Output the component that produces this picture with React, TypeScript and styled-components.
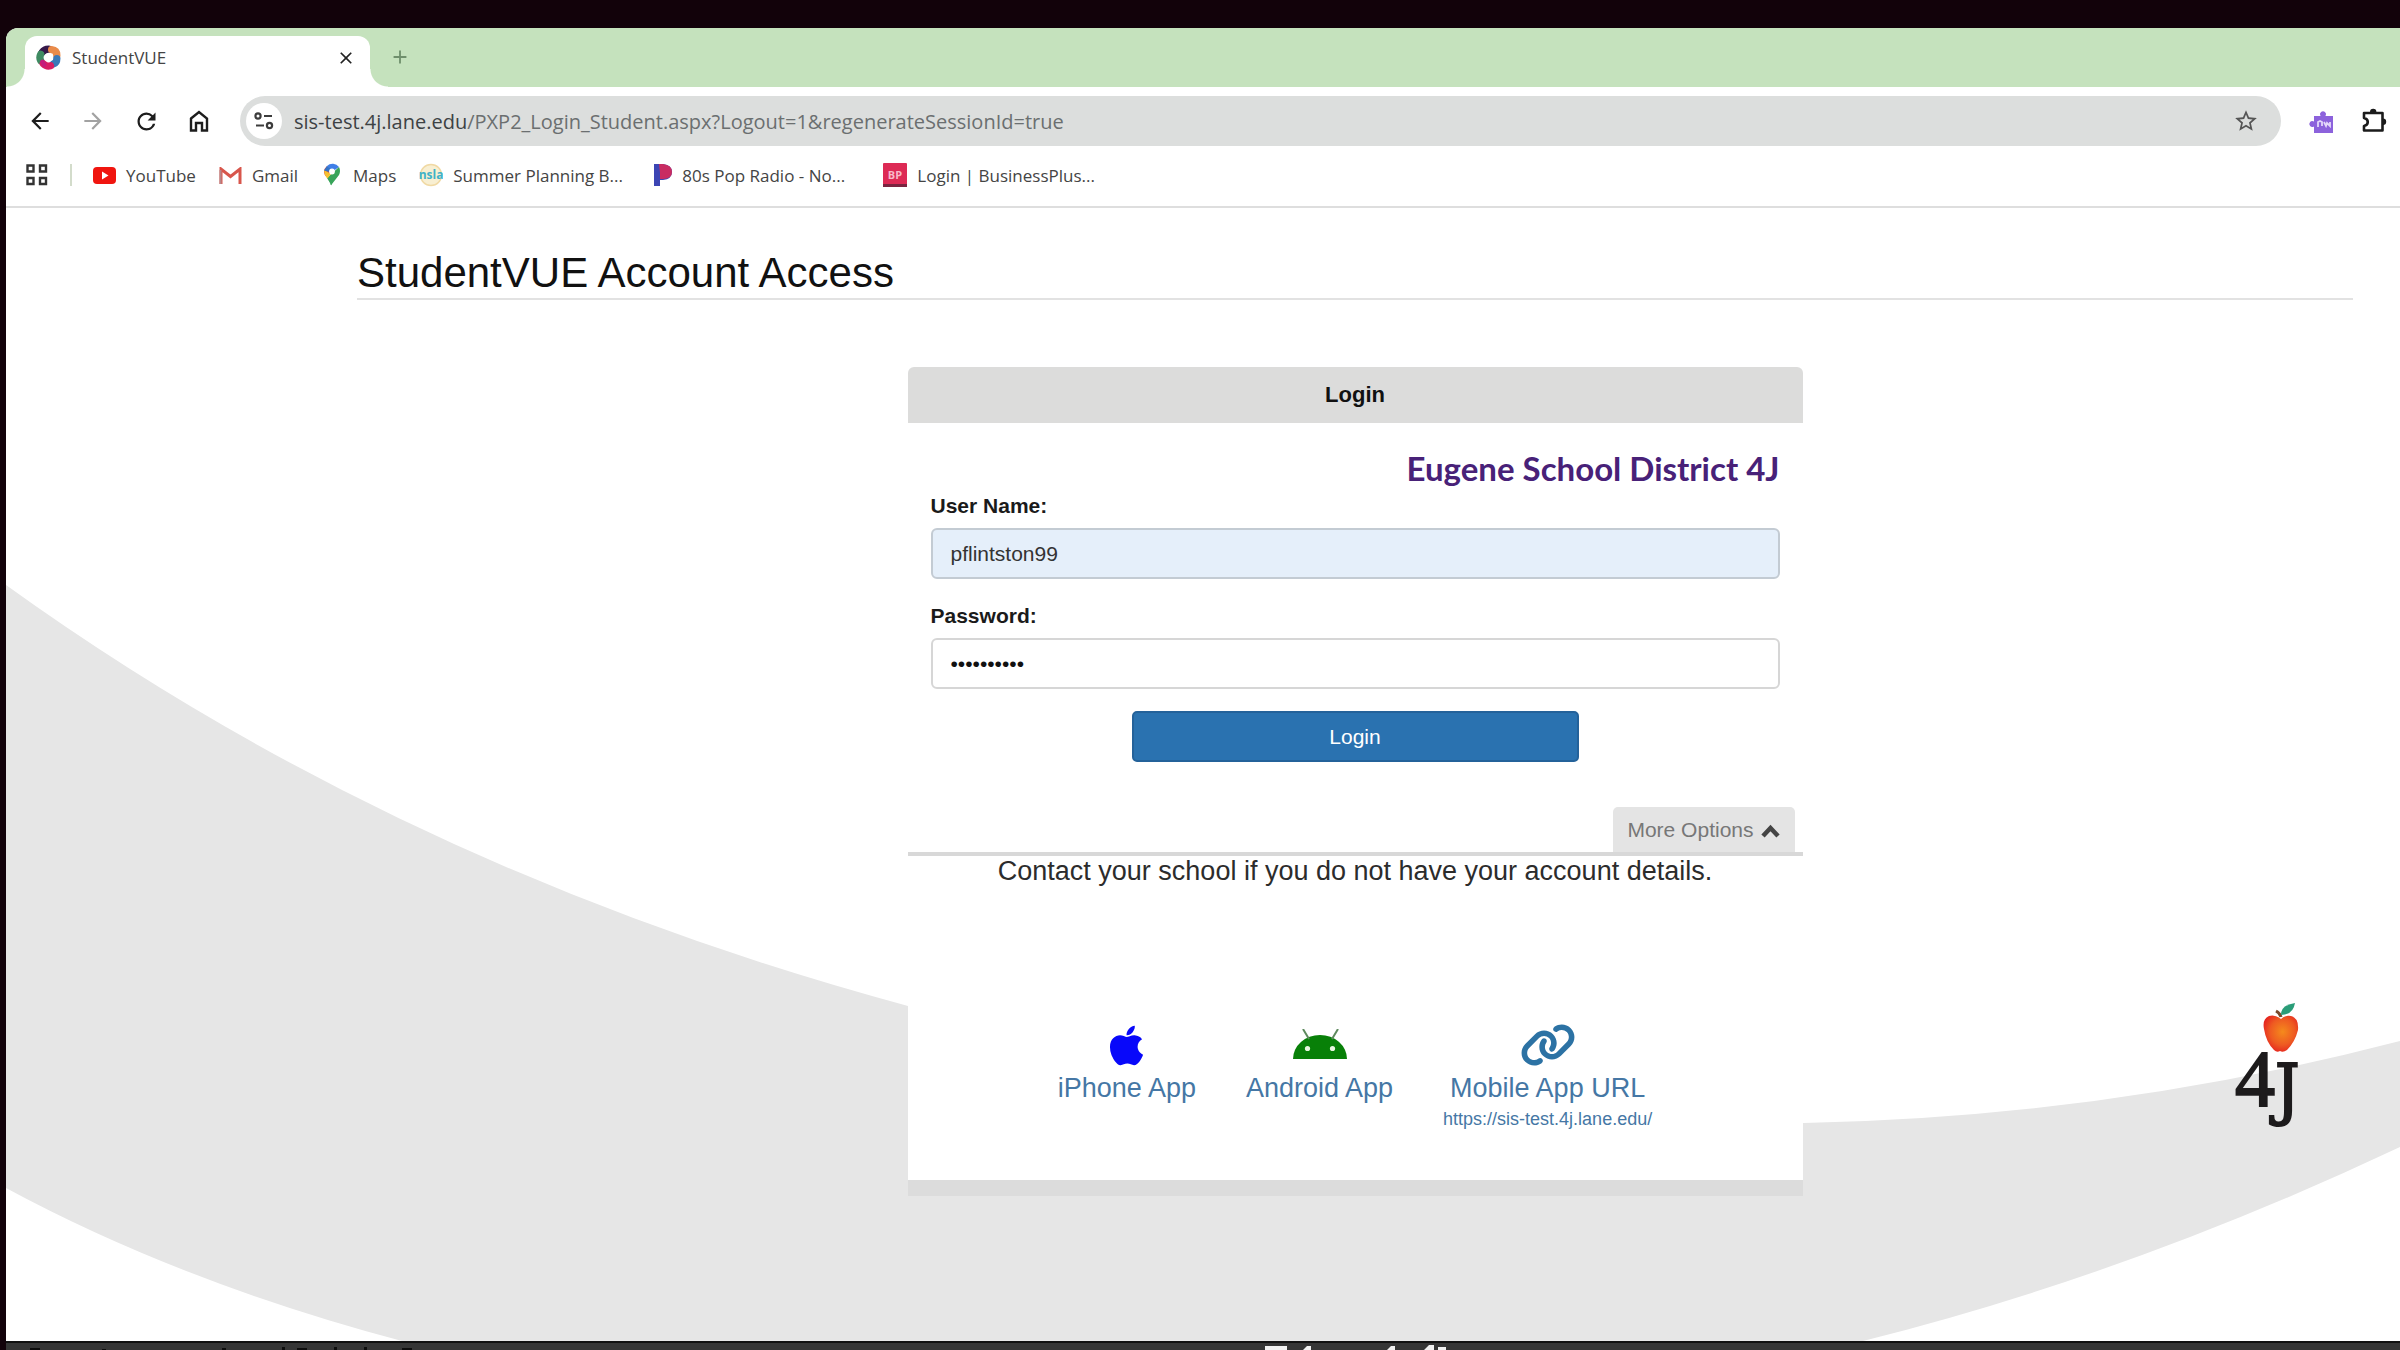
import React from "react";
import styled, { createGlobalStyle } from "styled-components";
import { MdArrowBack, MdArrowForward, MdRefresh, MdStarBorder, MdClose, MdAdd } from "react-icons/md";
import { FaApple, FaLink } from "react-icons/fa6";

const uiFont = `"Open Sans", "Noto Sans", sans-serif`;
const pageFont = `"Liberation Sans", Arial, sans-serif`;

const GlobalStyle = createGlobalStyle`
  *, *::before, *::after { box-sizing: border-box; }
  body { margin: 0; background: #12020a; }
  button { border: 0; padding: 0; background: none; font: inherit; color: inherit; cursor: pointer; }
  svg { display: block; flex: none; }
`;

const Desktop = styled.div`
  display: flex;
  flex-direction: column;
  min-height: 100vh;
  padding: 28px 0 0 6px;
  background: #12020a;
  overflow: hidden;
`;

const BrowserWindow = styled.div`
  flex: 1;
  display: flex;
  flex-direction: column;
  border-radius: 12px 0 0 0;
  overflow: hidden;
  background: #fff;
`;

const TabStrip = styled.div`
  display: flex;
  align-items: flex-end;
  height: 59px;
  padding-left: 19px;
  background: #c5e2bd;
  font-family: ${uiFont};
`;

const Tab = styled.div`
  position: relative;
  display: flex;
  align-items: center;
  width: 345px;
  height: 51px;
  padding: 0 14px 8px 11px;
  gap: 11px;
  border-radius: 12px 12px 0 0;
  background: #fff;
  font-size: 17px;
  color: #444;

  &::before,
  &::after {
    content: "";
    position: absolute;
    bottom: 0;
    width: 18px;
    height: 18px;
  }
  &::before {
    right: 100%;
    background: radial-gradient(circle at 0 0, transparent 17px, #fff 18px);
  }
  &::after {
    left: 100%;
    background: radial-gradient(circle at 100% 0, transparent 17px, #fff 18px);
  }
`;

const TabTitle = styled.span`
  flex: 1;
`;

const NewTab = styled.button`
  display: flex;
  margin: 0 0 19px 19px;
  color: #6f8f6c;
`;

const Toolbar = styled.div`
  display: flex;
  align-items: center;
  padding: 9px 12px 9px 20px;
  gap: 25px;
  color: #222;
`;

const IconButton = styled.button<{ $dim?: boolean }>`
  display: flex;
  align-items: center;
  justify-content: center;
  width: 28px;
  height: 28px;
  color: ${(p) => (p.$dim ? "#a2a2a2" : "#1d1d1d")};
`;

const AddressBar = styled.div`
  flex: 1;
  display: flex;
  align-items: center;
  height: 50px;
  margin-left: 2px;
  padding: 0 21px 0 6px;
  gap: 12px;
  border-radius: 25px;
  background: #dcdedd;
  font-family: ${uiFont};
  font-size: 20px;
`;

const SiteInfo = styled.button`
  display: flex;
  align-items: center;
  justify-content: center;
  width: 36px;
  height: 36px;
  border-radius: 50%;
  background: #fff;
`;

const Address = styled.div`
  flex: 1;
  color: #6b6f70;
  white-space: nowrap;

  b {
    font-weight: 400;
    color: #3d4244;
  }
`;

const Extensions = styled.div`
  display: flex;
  gap: 26px;
`;

const Bookmarks = styled.nav`
  display: flex;
  align-items: center;
  height: 53px;
  padding: 0 20px 11px;
  gap: 23px;
  border-bottom: 2px solid #dedede;
  font-family: ${uiFont};
  font-size: 17px;
  color: #444;
`;

const Divider = styled.span`
  width: 2px;
  height: 22px;
  margin: 0 -2px 0 -1px;
  background: #d3dccb;
`;

const Bookmark = styled.a`
  display: flex;
  align-items: center;
  gap: 10px;
  color: inherit;
  text-decoration: none;
  white-space: nowrap;
`;

const BookmarkLabel = styled.span<{ $wide?: boolean }>`
  min-width: ${(p) => (p.$wide ? "178px" : "0")};
`;

const Page = styled.main`
  position: relative;
  flex: 1;
  padding: 41px 47px 40px 351px;
  font-family: ${pageFont};
  color: #222;
`;

const Backdrop = styled.svg`
  position: absolute;
  inset: 0;
  width: 100%;
  height: 100%;
`;

const Content = styled.div`
  position: relative;
`;

const Title = styled.h1`
  margin: 0 0 67px;
  padding-bottom: 1px;
  border-bottom: 2px solid #e2e2e2;
  font-size: 42px;
  line-height: 48px;
  font-weight: 400;
  color: #111;
`;

const Panel = styled.section`
  width: 895px;
  max-width: 100%;
  margin: 0 auto;
  border-bottom: 16px solid #dcdcdc;
  border-radius: 6px 6px 0 0;
  background: #fff;
`;

const PanelHeader = styled.h2`
  margin: 0;
  border-radius: 6px 6px 0 0;
  background: #dcdcdb;
  font-size: 22px;
  line-height: 56px;
  text-align: center;
  color: #111;
`;

const LoginForm = styled.form`
  display: flex;
  flex-direction: column;
  padding: 27px 23px 45px;
`;

const District = styled.div`
  margin-bottom: 8px;
  font-family: Lato, sans-serif;
  font-size: 33px;
  line-height: 36px;
  font-weight: 700;
  text-align: right;
  color: #482178;
`;

const Label = styled.label`
  margin-bottom: 10px;
  font-size: 21px;
  line-height: 24px;
  font-weight: 700;
  color: #1a1a1a;
`;

const Field = styled.input<{ $filled?: boolean }>`
  height: 51px;
  margin-bottom: 25px;
  padding: 0 18px;
  border: 2px solid ${(p) => (p.$filled ? "#c3cbd3" : "#d6d6d6")};
  border-radius: 6px;
  background: ${(p) => (p.$filled ? "#e5effa" : "#fff")};
  font-family: ${pageFont};
  font-size: 21px;
  color: #333;

  &[type="password"] {
    margin-bottom: 22px;
    color: #111;
  }
`;

const LoginButton = styled.button`
  align-self: center;
  width: 447px;
  height: 51px;
  border: 2px solid #24629a;
  border-radius: 5px;
  background: #2a72b0;
  font-size: 21px;
  color: #fff;
`;

const OptionsBar = styled.div`
  display: flex;
  justify-content: flex-end;
  padding-right: 8px;
  border-bottom: 4px solid #d8d8d8;
`;

const OptionsTab = styled.button`
  display: flex;
  align-items: center;
  height: 45px;
  padding: 0 15px 0 14px;
  gap: 7px;
  border-radius: 5px 5px 0 0;
  background: #e4e4e4;
  font-size: 21px;
  color: #777;
`;

const Contact = styled.p`
  margin: 0 0 137px;
  font-size: 27px;
  line-height: 30px;
  text-align: center;
  color: #2c2c2c;
`;

const Apps = styled.div`
  display: flex;
  justify-content: center;
  gap: 50px;
  padding-bottom: 50px;
`;

const AppLink = styled.a`
  display: flex;
  flex-direction: column;
  align-items: center;
  font-size: 27px;
  line-height: 30px;
  color: #4577a5;
  text-decoration: none;

  small {
    margin-top: 5px;
    font-size: 18px;
    line-height: 22px;
  }
`;

const AppIcon = styled.span<{ $color: string }>`
  display: flex;
  align-items: center;
  height: 44px;
  margin-bottom: 6px;
  color: ${(p) => p.$color};
`;

const DistrictLogo = styled.svg`
  position: absolute;
  right: 96px;
  bottom: 208px;
`;

const CaptionStrip = styled.footer`
  height: 9px;
  border-top: 2px solid #111;
  background: #353535;
`;

const StudentVueIcon = () => (
  <svg width="25" height="25" viewBox="0 0 24 24" fill="none" strokeWidth="7" strokeLinecap="round">
    <path d="M6 7Q8 4 12 4" stroke="#35184a" />
    <path d="M15 4.500Q20 5 20 10" stroke="#e98b4a" />
    <path d="M20 13Q20 17 17 18" stroke="#3a79b8" />
    <path d="M4.500 15Q3 12 4.500 9" stroke="#3f8b62" />
    <path d="M14 20Q10 21 7 18" stroke="#d81e63" />
    <path d="M6 16l2 3" stroke="#c41c7c" strokeWidth="4" />
    <circle cx="12" cy="12" r="3.800" fill="#fff" stroke="none" />
  </svg>
);

const HomeIcon = () => (
  <svg width="20" height="24" viewBox="0 0 20 24" fill="none" stroke="currentColor" strokeWidth="2.4">
    <path d="M2 9.5L10 3l8 6.500V21.500h-5v-7.500H7v7.500H2z" />
  </svg>
);

const TuneIcon = () => (
  <svg width="20" height="20" viewBox="0 0 20 20" fill="none" stroke="#3c3c3c" strokeWidth="2.200">
    <circle cx="4" cy="5" r="2.600" />
    <path d="M10 5h8M2 14.500h8" />
    <circle cx="15.500" cy="14.500" r="2.600" />
  </svg>
);

const PurplePuzzle = () => (
  <svg width="25" height="25" viewBox="0 0 25 25">
    <path d="M6 7h6.500a3 3 0 1 1 5 0H25v17H6v-6.500a3 3 0 1 1 0-5z" fill="#8c62dc" />
    <path d="M10 18v-5l2-1 2 1v4m2-4l2 4 1-3 3 3v-4" fill="none" stroke="#e4d8fa" strokeWidth="1.800" />
  </svg>
);

const PuzzleIcon = () => (
  <svg width="25" height="26" viewBox="0 0 25 26">
    <path d="M2 5h18.500v17.500H2v-4.500c5-1 5-7 0-8z" fill="none" stroke="#1b1b1b" strokeWidth="2.600" strokeLinejoin="round" />
    <path d="M8 4a3.200 3.200 0 0 1 6.400 0zM21 10.500a3.200 3.200 0 0 1 0 6.400z" fill="#1b1b1b" />
  </svg>
);

const GridIcon = () => (
  <svg width="22" height="22" viewBox="0 0 22 22" fill="none" stroke="#333" strokeWidth="2.400">
    <path d="M1.500 1.500h6v6h-6zM14 1.500h6v6h-6zM1.500 14h6v6h-6zM14 14h6v6h-6z" />
  </svg>
);

const YouTubeIcon = () => (
  <svg width="23" height="17" viewBox="0 0 23 17">
    <rect width="23" height="17" rx="4" fill="#f0150f" />
    <path d="M9 4.500l6.500 4-6.500 4z" fill="#fff" />
  </svg>
);

const GmailIcon = () => (
  <svg width="23" height="17" viewBox="0 0 23 17" fill="none">
    <path d="M2 17V2l9.500 7.500L21 2v15" stroke="#d8564c" strokeWidth="3" />
    <path d="M1.500 17V3" stroke="#b8878a" strokeWidth="2" />
  </svg>
);

const MapsIcon = () => (
  <svg width="22" height="24" viewBox="0 0 22 24">
    <path d="M3 9a8 8 0 0 1 3-6l5 5.500-5 6Q3 12 3 9z" fill="#e0483e" />
    <path d="M6 3a8 8 0 0 1 12 1l-7 5z" fill="#3f7fe8" />
    <path d="M18 4q2 4 0 8l-7 9q-1 3-2-1l-3-5z" fill="#38a45a" />
    <path d="M3.200 7Q3 12 6.500 15.500L10 11z" fill="#f3c12f" />
    <path d="M6 3L3 7.500 8.500 9 11 7z" fill="#3274c8" />
    <circle cx="11" cy="8.500" r="2.900" fill="#fff" />
  </svg>
);

const NslaIcon = () => (
  <svg width="24" height="24" viewBox="0 0 24 24">
    <circle cx="12" cy="12" r="10.500" fill="#f8efd2" stroke="#f0d9a4" strokeWidth="1.500" />
    <text x="12" y="16" fontFamily="Open Sans, sans-serif" fontSize="12" fontWeight="700" textAnchor="middle" fill="#3fb2c8">nsla</text>
  </svg>
);

const PandoraIcon = () => (
  <svg width="18" height="22" viewBox="0 0 18 22">
    <path d="M0 0h9q9 1 9 8t-9 8H6v6H0z" fill="#3c45b4" />
    <path d="M5 0h4q9 1 9 8t-9 7H6V9z" fill="#c92c62" />
  </svg>
);

const BusinessPlusIcon = () => (
  <svg width="24" height="24" viewBox="0 0 24 24">
    <rect width="24" height="24" rx="1" fill="#dd2a55" />
    <rect y="21" width="24" height="3" fill="#7a2440" />
    <text x="12" y="16" fontFamily="Open Sans, sans-serif" fontSize="11" fontWeight="700" textAnchor="middle" fill="#f7b9c8">BP</text>
  </svg>
);

const AndroidIcon = () => (
  <svg width="54" height="32" viewBox="0 0 54 32">
    <path d="M0 30a27 24 0 0 1 54 0z" fill="#088008" />
    <path d="M10 0l6 10M45 0l-6 10" stroke="#5e8a5e" strokeWidth="2" />
    <circle cx="14.500" cy="19.500" r="2.600" fill="#e8f6e0" />
    <circle cx="39.500" cy="19.500" r="2.600" fill="#e8f6e0" />
  </svg>
);

const ChevronUp = () => (
  <svg width="19" height="17" viewBox="0 0 19 17" fill="none" stroke="#444" strokeWidth="4.500">
    <path d="M2 15l7.500-8L17 15" />
  </svg>
);

const bookmarks = [
  { label: "YouTube", icon: <YouTubeIcon /> },
  { label: "Gmail", icon: <GmailIcon /> },
  { label: "Maps", icon: <MapsIcon /> },
  { label: "Summer Planning B...", icon: <NslaIcon />, wide: true },
  { label: "80s Pop Radio - No...", icon: <PandoraIcon />, wide: true },
  { label: "Login | BusinessPlus...", icon: <BusinessPlusIcon />, wide: true },
];

export default function App() {
  return (
    <Desktop>
      <GlobalStyle />
      <BrowserWindow>
        <TabStrip>
          <Tab>
            <StudentVueIcon />
            <TabTitle>StudentVUE</TabTitle>
            <button aria-label="Close tab"><MdClose size={20} color="#222" /></button>
          </Tab>
          <NewTab aria-label="New tab"><MdAdd size={22} /></NewTab>
        </TabStrip>
        <Toolbar>
          <IconButton aria-label="Back"><MdArrowBack size={26} /></IconButton>
          <IconButton aria-label="Forward" $dim><MdArrowForward size={26} /></IconButton>
          <IconButton aria-label="Reload"><MdRefresh size={27} /></IconButton>
          <IconButton aria-label="Home"><HomeIcon /></IconButton>
          <AddressBar>
            <SiteInfo aria-label="Site information"><TuneIcon /></SiteInfo>
            <Address><b>sis-test.4j.lane.edu</b>/PXP2_Login_Student.aspx?Logout=1&amp;regenerateSessionId=true</Address>
            <IconButton aria-label="Bookmark this page"><MdStarBorder size={26} color="#555" /></IconButton>
          </AddressBar>
          <Extensions>
            <IconButton aria-label="Extension"><PurplePuzzle /></IconButton>
            <IconButton aria-label="Extensions"><PuzzleIcon /></IconButton>
          </Extensions>
        </Toolbar>
        <Bookmarks>
          <button aria-label="All apps"><GridIcon /></button>
          <Divider />
          {bookmarks.map((b) => (
            <Bookmark key={b.label} href="#">
              {b.icon}
              <BookmarkLabel $wide={b.wide}>{b.label}</BookmarkLabel>
            </Bookmark>
          ))}
        </Bookmarks>
        <Page>
          <Backdrop viewBox="6 208 2394 1133" preserveAspectRatio="none" aria-hidden="true">
            <path
              d="M6 585Q400 869 908 1006Q1360 1128 1804 1123Q2108 1117 2400 1041V1147Q2131 1274 1863 1341H402Q180 1282 6 1188Z"
              fill="#e6e6e6"
            />
          </Backdrop>
          <Content>
            <Title>StudentVUE Account Access</Title>
            <Panel>
              <PanelHeader>Login</PanelHeader>
              <LoginForm onSubmit={(e) => e.preventDefault()}>
                <District>Eugene School District 4J</District>
                <Label htmlFor="username">User Name:</Label>
                <Field id="username" type="text" defaultValue="pflintston99" $filled />
                <Label htmlFor="password">Password:</Label>
                <Field id="password" type="password" defaultValue="yabbadabba" />
                <LoginButton type="submit">Login</LoginButton>
              </LoginForm>
              <OptionsBar>
                <OptionsTab>More Options <ChevronUp /></OptionsTab>
              </OptionsBar>
              <Contact>Contact your school if you do not have your account details.</Contact>
              <Apps>
                <AppLink href="#">
                  <AppIcon $color="#0808fa"><FaApple size={45} /></AppIcon>
                  iPhone App
                </AppLink>
                <AppLink href="#">
                  <AppIcon $color="#088008"><AndroidIcon /></AppIcon>
                  Android App
                </AppLink>
                <AppLink href="#">
                  <AppIcon $color="#2c72a4"><FaLink size={56} /></AppIcon>
                  Mobile App URL
                  <small>https://sis-test.4j.lane.edu/</small>
                </AppLink>
              </Apps>
            </Panel>
          </Content>
          <DistrictLogo width="70" height="130" viewBox="0 0 70 130" role="img" aria-label="4J">
            <defs>
              <radialGradient id="apple" cx="55%" cy="45%" r="60%">
                <stop offset="0" stopColor="#f58a1c" />
                <stop offset="0.600" stopColor="#ee5a22" />
                <stop offset="1" stopColor="#e5231f" />
              </radialGradient>
            </defs>
            <path d="M47 16q-6-5-12-3-7 3-5 13 2 13 10 21 3 3 6 1 3 2 7-1 8-8 11-20 1-12-7-14-6-1-10 3z" fill="url(#apple)" />
            <path d="M47 14q-1-4-5-6" stroke="#7a4a2c" strokeWidth="3" fill="none" />
            <path d="M47 12q0-10 14-12-2 12-14 12z" fill="#2a9d78" />
            <text y="103" fill="#1d1b1c" stroke="#1d1b1c" strokeWidth="2">
              <tspan x="1" fontFamily="Liberation Serif, serif" fontSize="80">4</tspan>
              <tspan x="41" y="109" fontFamily="DejaVu Serif Condensed, DejaVu Serif, serif" fontSize="68">J</tspan>
            </text>
          </DistrictLogo>
        </Page>
      </BrowserWindow>
      <CaptionStrip>
        <svg width="1460" height="7" viewBox="6 0 1460 7" aria-hidden="true">
          <path d="M30 5h10v2H30zM102 6h4v1h-4zM222 5h4v2h-4zM282 4h3v3h-3zM297 5h10v2h-10zM334 4h3v3h-3zM364 4h3v3h-3zM402 5h10v2h-10z" fill="#0c0c0c" />
          <path d="M1265 3h22v4h-22zM1303 7l4-4h4v4zM1387 7l4-4h4v4zM1424 7l5-5h5v5zM1438 4h8v3h-8z" fill="#f1f1f1" />
        </svg>
      </CaptionStrip>
    </Desktop>
  );
}
